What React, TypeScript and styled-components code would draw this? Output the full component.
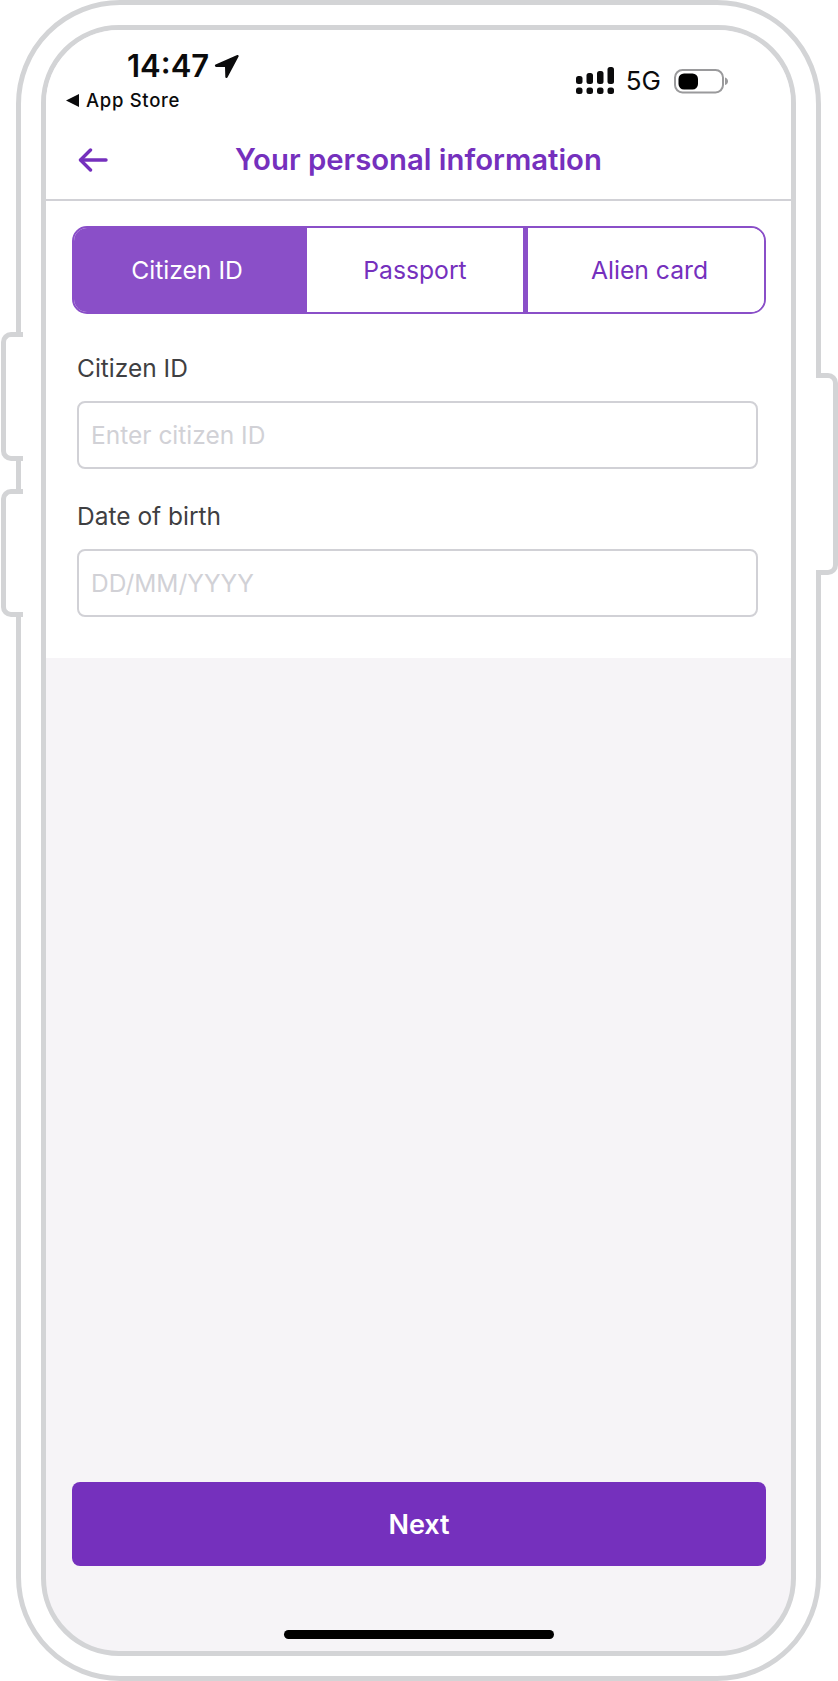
import styled, { createGlobalStyle } from "styled-components";

const GlobalStyle = createGlobalStyle`
  html, body { margin: 0; padding: 0; background: #fff; }
  * { box-sizing: border-box; }
  body { font-family: Inter, "Liberation Sans", sans-serif; }
`;

const Page = styled.div`
  position: relative;
  width: 838px;
  height: 1681px;
  padding-left: 16px;
  overflow: hidden;
`;

const PhoneShell = styled.div`
  width: 805px;
  height: 1681px;
  padding: 20px;
  border: 5.5px solid #d3d4d6;
  border-radius: 104px;
  background: #fff;
`;

const SideButton = styled.div<{ $side: "left" | "right"; $top: number; $height: number }>`
  position: absolute;
  top: ${(p) => p.$top}px;
  height: ${(p) => p.$height}px;
  width: 22px;
  background: #fff;
  border: 5px solid #d3d4d6;
  ${(p) =>
    p.$side === "left"
      ? "left: 1px; border-right: none; border-radius: 10px 0 0 10px;"
      : "right: 0; border-left: none; border-radius: 0 10px 10px 0; width: 22px;"}
`;

const Screen = styled.div`
  height: 100%;
  display: flex;
  flex-direction: column;
  border: 5px solid #d3d4d6;
  border-radius: 78px;
  overflow: hidden;
  background: #f6f4f7;
`;

const StatusBar = styled.div`
  height: 92px;
  flex: none;
  display: flex;
  justify-content: space-between;
  padding: 21px 63px 0 20px;
  background: #fff;
`;

const StatusLeft = styled.div`
  display: flex;
  flex-direction: column;
`;

const TimeRow = styled.div`
  display: flex;
  align-items: center;
  gap: 5px;
  padding-left: 61px;
  height: 30px;
`;

const Time = styled.span`
  font-size: 31px;
  font-weight: 600;
  line-height: 30px;
  color: #0b0b0c;
`;

const BackToApp = styled.div`
  display: flex;
  align-items: center;
  gap: 7px;
  margin-top: 8px;
  font-size: 18.5px;
  font-weight: 500;
  line-height: 22px;
  letter-spacing: 0.7px;
  color: #0b0b0c;
`;

const StatusRight = styled.div`
  display: flex;
  align-items: center;
  height: 30px;
  margin-top: 15px;
`;

const Network = styled.span`
  margin: 0 13px 0 12px;
  font-size: 26px;
  line-height: 30px;
  color: #0b0b0c;
`;

const Header = styled.header`
  height: 78.5px;
  flex: none;
  display: flex;
  align-items: center;
  position: relative;
  padding: 0 0 0 32px;
  background: #fff;
  border-bottom: 2px solid #d1d1d6;
`;

const BackButton = styled.button`
  display: flex;
  padding: 0;
  border: none;
  background: none;
  z-index: 1;
`;

const Title = styled.h1`
  position: absolute;
  left: 0;
  right: 0;
  margin: 0;
  text-align: center;
  font-size: 29.3px;
  font-weight: 600;
  line-height: 36px;
  color: #7530bd;
`;

const Form = styled.div`
  flex: none;
  height: 457px;
  padding: 25px 25px 0 26px;
  background: #fff;
`;

const Tabs = styled.div`
  display: grid;
  grid-template-columns: 233px 221px 240px;
  height: 88px;
  border: 2px solid #8a4fc8;
  border-radius: 15px;
  overflow: hidden;
`;

const Tab = styled.div<{ $active?: boolean; $divided?: boolean; $last?: boolean }>`
  display: flex;
  align-items: center;
  justify-content: center;
  margin-left: ${(p) => (p.$active ? "-2px" : "0")};
  padding-right: ${(p) => (p.$active ? "5px" : "0")};
  padding-left: ${(p) => (p.$last ? "3px" : "0")};
  font-size: 24.7px;
  line-height: 30px;
  color: ${(p) => (p.$active ? "#fff" : "#7530bd")};
  background: ${(p) => (p.$active ? "#8a4fc8" : "#fff")};
  border-right: ${(p) => (p.$divided ? "5px solid #8a4fc8" : "none")};
`;

const Field = styled.label<{ $first?: boolean }>`
  display: block;
  margin: ${(p) => (p.$first ? "38px" : "31px")} 8px 0 5px;
`;

const FieldLabel = styled.span`
  display: block;
  margin-bottom: 17px;
  font-size: 24.5px;
  line-height: 32px;
  color: #3f3f42;
`;

const Input = styled.input`
  display: block;
  width: 100%;
  height: 68px;
  padding: 0 12px;
  border: 2px solid #d1d1d6;
  border-radius: 8px;
  outline: none;
  background: #fff;
  font-family: inherit;
  font-size: 24.5px;
  color: #3a3a3c;

  &::placeholder {
    color: #d1d1d6;
    opacity: 1;
  }
`;

const Footer = styled.div`
  flex: 1;
  display: flex;
  flex-direction: column;
  align-items: center;
  justify-content: flex-end;
  padding: 0 25px 12px 26px;
`;

const NextButton = styled.button`
  width: 100%;
  height: 84px;
  border: none;
  border-radius: 8px;
  background: #7530bd;
  font-family: inherit;
  font-size: 27px;
  font-weight: 600;
  color: #fff;
`;

const HomeIndicator = styled.div`
  width: 270px;
  height: 9px;
  margin-top: 64px;
  border-radius: 5px;
  background: #000;
`;

const LocationArrow = () => (
  <svg width="25" height="25" viewBox="0 0 25 25">
    <path
      d="M23.2 1.1 1.6 10.6c-1.2.6-.8 2.3.5 2.3l8.9.2.3 9.6c0 1.4 1.9 1.7 2.4.4l10.9-20.5c.4-1-.4-1.9-1.4-1.5Z"
      fill="#0b0b0c"
    />
  </svg>
);

const BackTriangle = () => (
  <svg width="13" height="13" viewBox="0 0 13 13">
    <path d="M13 0v13L0 6.5Z" fill="#0b0b0c" />
  </svg>
);

const SignalDots = () => (
  <svg width="38" height="28" viewBox="0 0 38 28" fill="#0b0b0c">
    <rect x="0" y="9" width="6.5" height="8" rx="2.5" />
    <rect x="10.5" y="6" width="6.5" height="11" rx="2.5" />
    <rect x="21" y="4" width="6.5" height="13" rx="2.5" />
    <rect x="31.5" y="0" width="6.5" height="17" rx="2.5" />
    <rect x="0" y="20.5" width="6.5" height="6.5" rx="2.5" />
    <rect x="10.5" y="20.5" width="6.5" height="6.5" rx="2.5" />
    <rect x="21" y="20.5" width="6.5" height="6.5" rx="2.5" />
    <rect x="31.5" y="20.5" width="6.5" height="6.5" rx="2.5" />
  </svg>
);

const Battery = () => (
  <svg width="54" height="25" viewBox="0 0 54 25">
    <rect x="1" y="1" width="48" height="22.5" rx="7.5" fill="#fff" stroke="#9a9a9c" strokeWidth="2" />
    <rect x="4.5" y="4.5" width="19.5" height="16" rx="5.5" fill="#000" />
    <path d="M51 8.5c1.8.5 3 2 3 3.8s-1.2 3.3-3 3.8Z" fill="#9a9a9c" />
  </svg>
);

const BackArrow = () => (
  <svg width="30" height="24" viewBox="0 0 30 24" fill="none" stroke="#7530bd" strokeWidth="3.4" strokeLinecap="round" strokeLinejoin="round">
    <path d="M28 12H3" />
    <path d="M12.5 2 2.5 12l10 10" />
  </svg>
);

export default function App() {
  return (
    <>
      <GlobalStyle />
      <Page>
        <PhoneShell>
          <Screen>
            <StatusBar>
              <StatusLeft>
                <TimeRow>
                  <Time>14:47</Time>
                  <LocationArrow />
                </TimeRow>
                <BackToApp>
                  <BackTriangle />
                  App Store
                </BackToApp>
              </StatusLeft>
              <StatusRight>
                <SignalDots />
                <Network>5G</Network>
                <Battery />
              </StatusRight>
            </StatusBar>
            <Header>
              <BackButton aria-label="Back">
                <BackArrow />
              </BackButton>
              <Title>Your personal information</Title>
            </Header>
            <Form>
              <Tabs>
                <Tab $active>Citizen ID</Tab>
                <Tab $divided>Passport</Tab>
                <Tab $last>Alien card</Tab>
              </Tabs>
              <Field $first>
                <FieldLabel>Citizen ID</FieldLabel>
                <Input placeholder="Enter citizen ID" />
              </Field>
              <Field>
                <FieldLabel>Date of birth</FieldLabel>
                <Input placeholder="DD/MM/YYYY" />
              </Field>
            </Form>
            <Footer>
              <NextButton>Next</NextButton>
              <HomeIndicator />
            </Footer>
          </Screen>
        </PhoneShell>
        <SideButton $side="left" $top={332} $height={129} />
        <SideButton $side="left" $top={489} $height={128} />
        <SideButton $side="right" $top={373} $height={202} />
      </Page>
    </>
  );
}
